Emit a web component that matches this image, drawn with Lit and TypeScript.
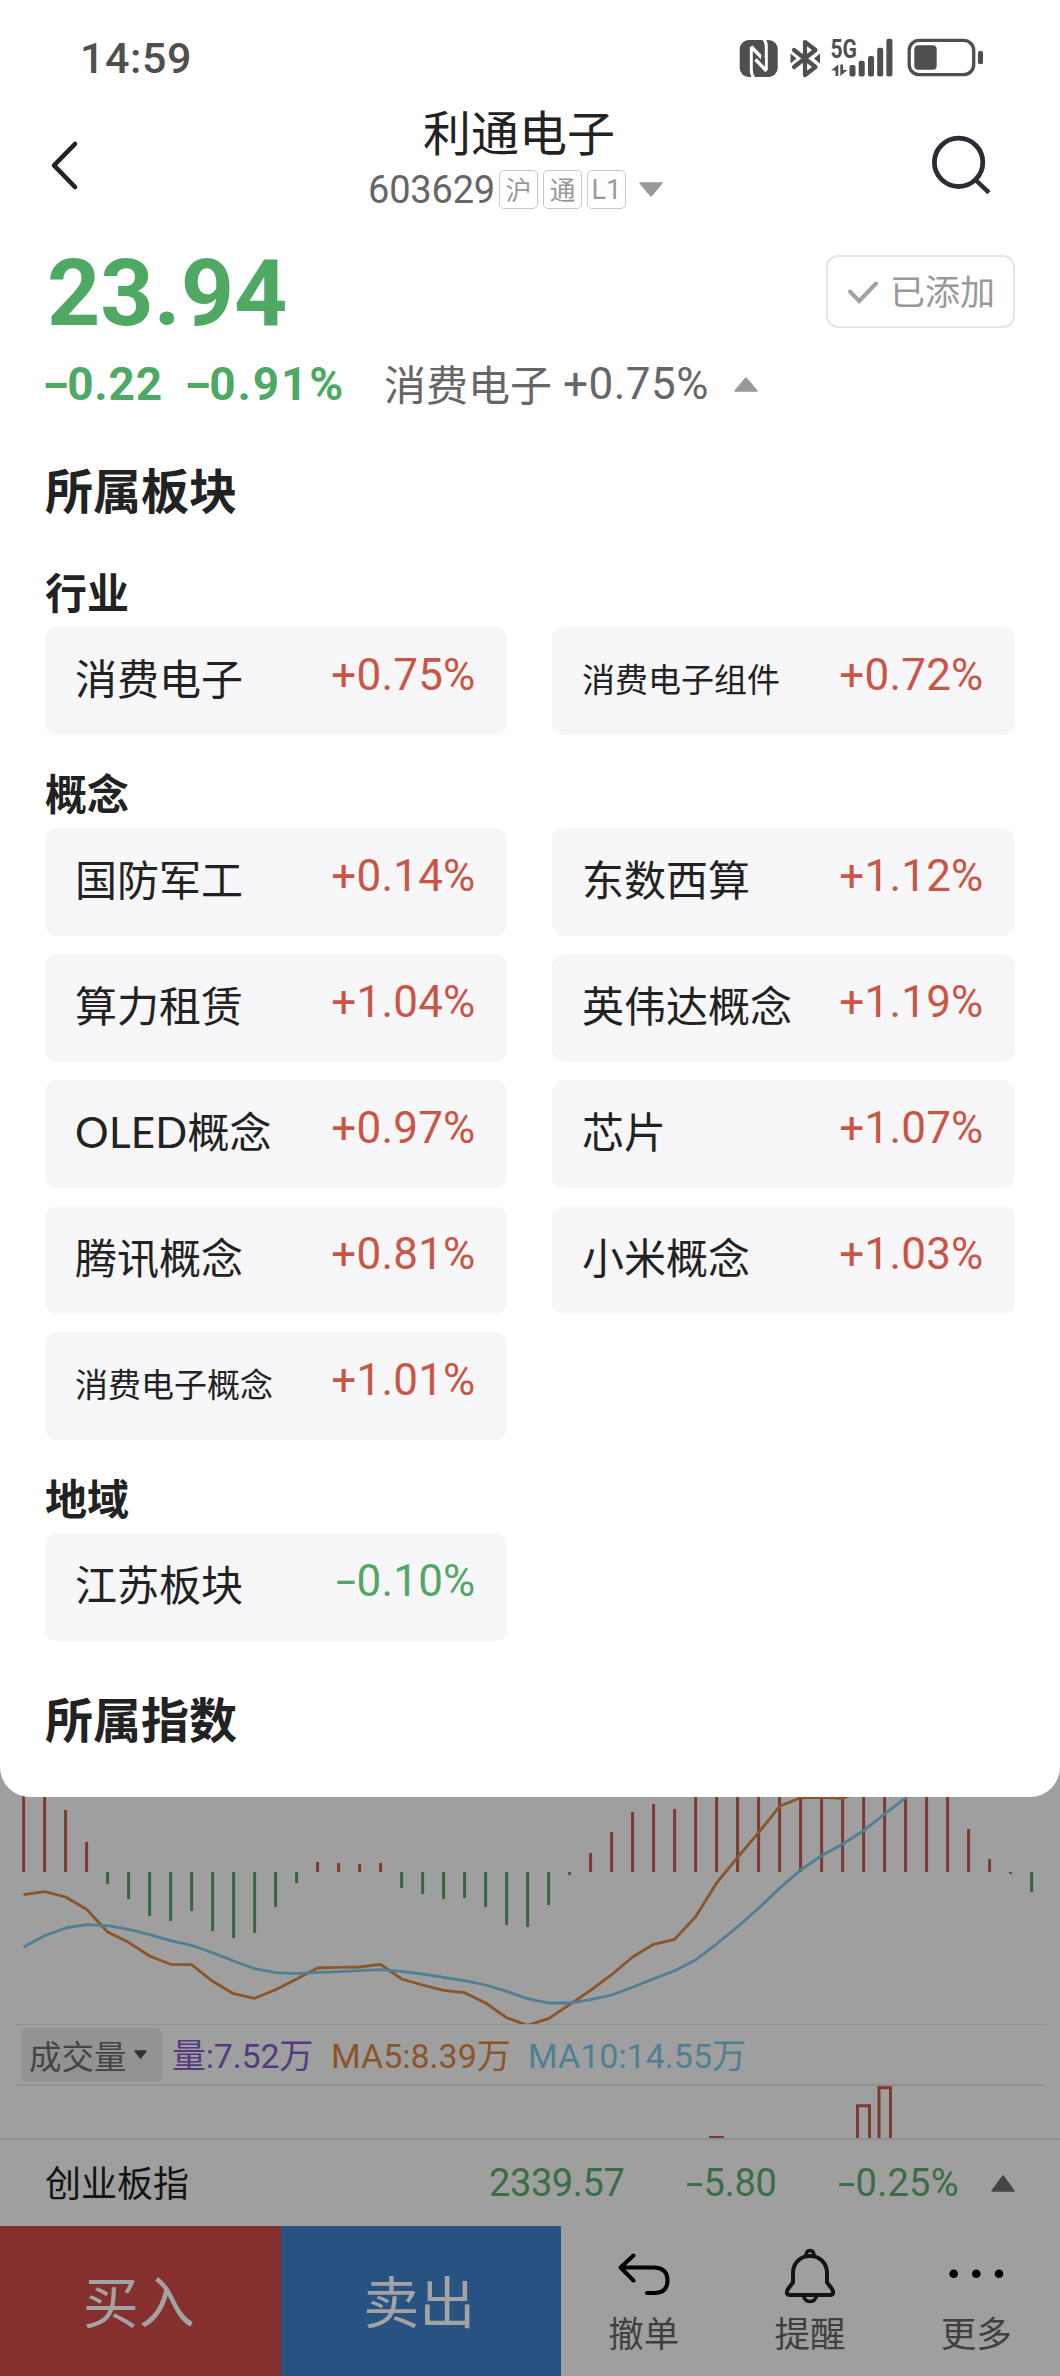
import { LitElement, html, svg, css } from "lit";
import { customElement, property } from "lit/decorators.js";
import { classMap } from "lit/directives/class-map.js";

interface Sector {
  name: string;
  change: string;
}

const groups: { title: string; items: Sector[] }[] = [
  {
    title: "行业",
    items: [
      { name: "消费电子", change: "+0.75%" },
      { name: "消费电子组件", change: "+0.72%" },
    ],
  },
  {
    title: "概念",
    items: [
      { name: "国防军工", change: "+0.14%" },
      { name: "东数西算", change: "+1.12%" },
      { name: "算力租赁", change: "+1.04%" },
      { name: "英伟达概念", change: "+1.19%" },
      { name: "OLED概念", change: "+0.97%" },
      { name: "芯片", change: "+1.07%" },
      { name: "腾讯概念", change: "+0.81%" },
      { name: "小米概念", change: "+1.03%" },
      { name: "消费电子概念", change: "+1.01%" },
    ],
  },
  { title: "地域", items: [{ name: "江苏板块", change: "-0.10%" }] },
];

// MACD chart geometry: one sample every 21px, zero axis at y = 79.
const STEP = 21;
const FIRST = 23.6;
const ZERO = 79;
const histogram = [
  -10, -10, 17, 49, 91, 106, 123, 128, 118, 138, 145, 140, 114, 90, 69, 70, 71,
  70, 95, 101, 106, 105, 114, 132, 134, 112, 82, 60, 39, 19, 11, 16, -10, -10,
  -10, -10, -10, -10, -10, -10, -10, -10, -10, -10, -10, 36, 66, 81, 99,
];
const fastLine = [
  101.7, 98.7, 104, 116.3, 139, 149.3, 163, 171.3, 171.7, 188.3, 200.7, 205.3,
  196.7, 186, 175, 174.3, 174, 171.3, 186, 192, 197.3, 199.7, 210, 224.7, 232.3,
  225.7, 211.7, 197.3, 181.7, 164, 151.3, 146.3, 123.7, 90, 64.3, 39.7, 13.3, 4.8,
  4.4, 5.4, -3,
];
const slowLine = [
  154, 142.7, 135, 131.7, 132.7, 136.3, 141.7, 147.7, 152.3, 159.7, 168, 175.7,
  179.7, 180.7, 179.3, 178.7, 177.7, 176.7, 178.3, 181, 184.3, 187.7, 192, 198.3,
  205.7, 210, 210, 206.7, 202, 194.3, 185.7, 177.7, 167, 151, 133.7, 115.3, 95.3,
  77, 62.7, 51, 37.7, 21, 5, -10,
];

const points = (ys: number[]) =>
  ys.map((y, i) => `${(FIRST + i * STEP).toFixed(1)},${y}`).join(" ");

/** Figure whose leading minus is drawn as a wide dash. */
const figure = (v: string) =>
  v.startsWith("-") ? html`<span class="dash">-</span>${v.slice(1)}` : v;

/** Sets a leading Latin run in its own face. */
const label = (v: string) => {
  const latin = v.match(/^[A-Z]+/)?.[0] ?? "";
  return latin ? html`<span class="latin">${latin}</span>${v.slice(latin.length)}` : v;
};

const dashStyles = css`
  .dash {
    display: inline-block;
    width: 0.46em;
    text-align: center;
    transform: scaleX(1.65);
    letter-spacing: 0;
  }
`;

@customElement("sector-card")
export class SectorCard extends LitElement {
  @property() name = "";
  @property() change = "";

  static styles = [
    dashStyles,
    css`
      :host {
        display: flex;
        justify-content: space-between;
        height: 108px;
        box-sizing: border-box;
        padding: 0 31.5px 0 30px;
        border-radius: 12px;
        background: #f7f7f9;
        white-space: nowrap;
      }
      .name {
        font: 400 42px/100px "Noto Sans CJK SC", sans-serif;
        color: #222;
      }
      .latin {
        font-family: Lato, sans-serif;
        line-height: 0;
        letter-spacing: 0.3px;
      }
      .small {
        font-size: 33px;
        line-height: 102px;
      }
      .change {
        font: 400 44px/97px Roboto, sans-serif;
        letter-spacing: 0.2px;
        color: #cb5545;
      }
      .down {
        color: #50a865;
      }
    `,
  ];

  render() {
    return html`
      <span class=${classMap({ name: true, small: this.name.length === 6 && !/[A-Z]/.test(this.name) })}>${label(this.name)}</span>
      <span class=${classMap({ change: true, down: this.change.startsWith("-") })}>${figure(this.change)}</span>
    `;
  }
}

@customElement("app-root")
export class AppRoot extends LitElement {
  static styles = [
    dashStyles,
    css`
      :host {
        display: block;
        width: 1060px;
        height: 2376px;
        overflow: hidden;
        background: #9f9f9f;
        font-family: "Noto Sans CJK SC", sans-serif;
        color: #222;
        white-space: nowrap;
      }
      svg {
        display: block;
        flex: none;
      }
      .num {
        font-family: Roboto, sans-serif;
      }
      .sheet {
        position: relative;
        z-index: 1;
        height: 1797px;
        box-sizing: border-box;
        background: #fff;
        border-radius: 0 0 30px 30px;
      }
      .status {
        display: flex;
        justify-content: space-between;
        height: 100px;
        padding: 0 70px 0 80px;
        color: #4f4f4f;
      }
      .clock {
        font: 500 43px/116px Roboto, sans-serif;
        letter-spacing: 0.6px;
      }
      .status svg {
        margin-top: 34px;
      }
      .nav {
        display: flex;
        height: 125px;
        padding: 0 60px 0 45px;
      }
      .heading {
        flex: 1;
        display: flex;
        flex-direction: column;
        align-items: center;
      }
      .title {
        font-size: 48px;
        line-height: 60px;
        padding-left: 2px;
      }
      .sub {
        display: flex;
        align-items: center;
        height: 40px;
        margin-top: 9px;
        padding-right: 5px;
      }
      .code {
        font-size: 38px;
        line-height: 40px;
        padding-top: 2px;
        letter-spacing: -0.2px;
        color: #666;
        margin-right: 4px;
      }
      .tag {
        width: 39px;
        height: 39px;
        box-sizing: border-box;
        border: 1.5px solid #c9c9c9;
        border-radius: 5px;
        margin-right: 5px;
        text-align: center;
        font-size: 26px;
        line-height: 35px;
        color: #999;
      }
      .tag.num {
        font-size: 27px;
        line-height: 39px;
      }
      .sub svg {
        margin-left: 8px;
      }
      .quote {
        display: flex;
        justify-content: space-between;
        height: 127px;
        padding: 0 45px 0 47px;
      }
      .price {
        font-size: 93px;
        font-weight: 700;
        line-height: 138px;
        color: #50a865;
      }
      .added {
        display: flex;
        align-items: center;
        width: 189px;
        height: 73px;
        box-sizing: border-box;
        margin-top: 30px;
        padding-left: 19px;
        border: 2px solid #e5e5e5;
        border-radius: 12px;
        font-size: 35px;
        line-height: 64px;
        color: #999;
      }
      .added > span {
        height: 67px;
      }
      .added svg {
        margin-right: 11px;
      }
      .changes {
        display: flex;
        align-items: center;
        height: 64px;
        padding-left: 46px;
      }
      .delta {
        font-size: 46px;
        font-weight: 700;
        line-height: 64px;
        color: #50a865;
      }
      .delta.first {
        width: 142px;
        letter-spacing: 0.8px;
      }
      .delta.second {
        width: 192px;
        letter-spacing: 1.9px;
      }
      .industry {
        font-size: 42px;
        line-height: 60px;
        height: 63px;
        color: #666;
        width: 178px;
        margin-left: 4px;
      }
      .industry-change {
        font-size: 44px;
        line-height: 66px;
        letter-spacing: 0.5px;
        color: #666;
        width: 171px;
        margin-left: 1px;
      }
      .section {
        font-size: 48px;
        font-weight: 700;
        line-height: 60px;
        height: 60px;
        margin: 42px 0 0 45px;
      }
      .group-title {
        font-size: 42px;
        font-weight: 700;
        line-height: 48px;
        height: 60px;
        margin: 0;
      }
      .group {
        padding: 0 45px;
        margin-bottom: 33px;
      }
      .groups {
        padding-top: 49px;
      }
      .grid {
        display: grid;
        grid-template-columns: 462px 1fr;
        gap: 18px 45px;
      }
      .section.last {
        margin-top: 46px;
      }
      .macd {
        margin-top: -4px;
      }
      .indicator {
        display: flex;
        align-items: center;
        height: 59px;
        margin: 0 15px;
        border-top: 1px solid #909090;
        border-bottom: 2px solid #919191;
        padding-left: 6px;
        font-size: 33px;
      }
      .picker {
        display: flex;
        align-items: center;
        width: 141px;
        height: 54px;
        box-sizing: border-box;
        padding-left: 8px;
        border-radius: 6px;
        background: #939393;
        color: #444;
        font-size: 32.5px;
        line-height: 50px;
      }
      .picker svg {
        margin-left: 7px;
      }
      .legend {
        font-family: Roboto, "Noto Sans CJK SC", sans-serif;
        font-size: 34px;
        line-height: 54px;
        padding-top: 2px;
      }
      .vol {
        color: #553a80;
        width: 150px;
        margin-left: 10px;
        letter-spacing: -0.2px;
      }
      .ma5 {
        color: #8a5529;
        width: 197px;
        margin-left: 9px;
      }
      .ma10 {
        color: #4f7f92;
      }
      .index {
        display: flex;
        height: 86px;
        border-top: 2px solid #919191;
        padding-left: 45px;
        align-items: center;
      }
      .index-name {
        font-size: 36px;
        line-height: 80px;
        height: 84px;
        width: 444px;
        color: #141414;
      }
      .index-value {
        font-size: 38px;
        line-height: 86px;
        letter-spacing: -0.4px;
        color: #3a6c46;
      }
      .index-value.a {
        width: 197px;
      }
      .index-value.b {
        width: 152px;
        letter-spacing: -0.2px;
      }
      .index-value.c {
        width: 153px;
        letter-spacing: 0.3px;
      }
      .actions {
        display: flex;
        height: 150px;
      }
      .trade {
        width: 280.5px;
        box-sizing: border-box;
        padding-right: 3px;
        text-align: center;
        font-size: 56px;
        line-height: 145px;
        color: #a3a3a3;
      }
      .buy {
        background: #85302c;
      }
      .sell {
        background: #285282;
      }
      .tool {
        flex: 1;
        display: flex;
        flex-direction: column;
        align-items: center;
        color: #3f3f3f;
        font-size: 35.5px;
        line-height: 50px;
      }
      .tool svg {
        margin-top: 18px;
        margin-bottom: 3px;
      }
      .tool span {
        padding-right: 1px;
      }
    `,
  ];

  private statusIcons() {
    return svg`
      <svg width="255" height="50" viewBox="735 34 255 50" fill="#4f4f4f">
        <rect x="739.700" y="40" width="38" height="37" rx="9"/>
        <g stroke="#fff" stroke-width="3" fill="none">
          <path d="M754.500 79Q751.300 75 751.300 70V47"/>
          <path d="M762.500 38Q766.300 41 766.300 46V70"/>
          <path d="M751 46.500L762 58" stroke-width="3.400"/>
          <path d="M755.500 59.500L766.500 71" stroke-width="3.400"/>
        </g>
        <path d="M761 54.500L764.800 58.500V66L761 62z"/>
        <g fill="none" stroke="#4f4f4f" stroke-width="4.200" stroke-linejoin="round" stroke-linecap="round">
          <path d="M794 50l21.500 17-10.500 8V42l10.500 8-21.500 17"/>
        </g>
        <path d="M790.500 53.500l6 5-6 5zM820 53.500l-6 5 6 5z"/>
        <text x="830.500" y="57.500" font-family="Roboto, sans-serif" font-size="25.500" font-weight="700" textLength="26.500" lengthAdjust="spacingAndGlyphs">5G</text>
        <path d="M838.300 64.500v11.500h-2.800v-5.500h-4.500zM840.300 64.500h2.700v5.500h4.500l-7.200 6z"/>
        <rect x="849.500" y="65" width="6" height="11.500" rx="2"/>
        <rect x="858.700" y="60.700" width="6" height="15.800" rx="2"/>
        <rect x="868" y="56" width="6" height="20.500" rx="2"/>
        <rect x="877.200" y="47.700" width="6" height="28.800" rx="2"/>
        <rect x="886.400" y="38.700" width="6" height="37.800" rx="2"/>
        <rect x="909.200" y="40.300" width="64.500" height="34.400" rx="10" fill="none" stroke="#4f4f4f" stroke-width="3.300"/>
        <rect x="914.300" y="45.300" width="22.400" height="24.400" rx="4"/>
        <rect x="978" y="50.700" width="5" height="13.500" rx="2.500"/>
      </svg>`;
  }

  private triangle(up: boolean, w: number, h: number, color: string) {
    const d = up
      ? `M${w / 2} 1L${w - 1} ${h - 1}H1Z`
      : `M1 1H${w - 1}L${w / 2} ${h - 1}Z`;
    return html`<svg width=${w} height=${h} viewBox="0 0 ${w} ${h}">
      <path d=${d} fill=${color} stroke=${color} stroke-width="1.500" stroke-linejoin="round"></path>
    </svg>`;
  }

  private macdChart() {
    return html`
      <svg class="macd" width="1060" height="231" viewBox="0 0 1060 231">
        ${histogram.map((y, i) => {
          const x = FIRST + i * STEP - 1.500;
          return svg`<rect x=${x} y=${Math.min(y, ZERO)} width="3" height=${Math.abs(y - ZERO)}
            fill=${y < ZERO ? "#7d3a31" : "#376641"}></rect>`;
        })}
        <polyline points=${points(fastLine)} fill="none" stroke="#8a5529" stroke-width="2.800" stroke-linejoin="round"></polyline>
        <polyline points=${points(slowLine)} fill="none" stroke="#4f7f92" stroke-width="2.800" stroke-linejoin="round"></polyline>
      </svg>`;
  }

  render() {
    return html`
      <div class="sheet">
        <div class="status">
          <span class="clock">14:59</span>
          ${this.statusIcons()}
        </div>
        <div class="nav">
          <svg width="66" height="125" viewBox="46 100 66 125">
            <path d="M76 144L55 165.300 76 187" fill="none" stroke="#222" stroke-width="4.600" stroke-linecap="round" stroke-linejoin="round"></path>
          </svg>
          <div class="heading">
            <div class="title">利通电子</div>
            <div class="sub">
              <span class="code num">603629</span>
              <span class="tag">沪</span>
              <span class="tag">通</span>
              <span class="tag num">L1</span>
              ${this.triangle(false, 24, 15, "#999")}
            </div>
          </div>
          <svg width="75" height="125" viewBox="925 100 75 125">
            <g fill="none" stroke="#2a2d35" stroke-width="4.800">
              <circle cx="958.600" cy="162.300" r="24.200"></circle>
              <path d="M976 180.300L989 192.700" stroke-width="4.400"></path>
            </g>
          </svg>
        </div>
        <div class="quote">
          <span class="price num">23.94</span>
          <div class="added">
            <svg width="32" height="24" viewBox="847 280 32 24">
              <path d="M850 291.500L859.200 301 876 283.500" fill="none" stroke="#a3a3a3" stroke-width="4" stroke-linecap="round"></path>
            </svg>
            <span>已添加</span>
          </div>
        </div>
        <div class="changes">
          <span class="delta first num">${figure("-0.22")}</span>
          <span class="delta second num">${figure("-0.91%")}</span>
          <span class="industry">消费电子</span>
          <span class="industry-change num">+0.75%</span>
          ${this.triangle(true, 24, 15, "#999")}
        </div>
        <div class="section">所属板块</div>
        <div class="groups">
          ${groups.map(
            (g) => html`<div class="group">
              <div class="group-title">${g.title}</div>
              <div class="grid">
                ${g.items.map(
                  (s) => html`<sector-card .name=${s.name} .change=${s.change}></sector-card>`
                )}
              </div>
            </div>`
          )}
        </div>
        <div class="section last">所属指数</div>
      </div>

      ${this.macdChart()}
      <div class="indicator">
        <div class="picker">成交量${this.triangle(false, 13, 9, "#333")}</div>
        <span class="legend vol">量:7.52万</span>
        <span class="legend ma5">MA5:8.39万</span>
        <span class="legend ma10">MA10:14.55万</span>
      </div>
      <svg width="1060" height="52" viewBox="0 2086 1060 52">
        <g fill="none" stroke="#7d3a31" stroke-width="3">
          <path d="M709 2137.500H724M857.500 2140V2105.800H869.500V2140M879 2140V2087.800H890.500V2140"></path>
        </g>
      </svg>
      <div class="index">
        <span class="index-name">创业板指</span>
        <span class="index-value a num">2339.57</span>
        <span class="index-value b num">${figure("-5.80")}</span>
        <span class="index-value c num">${figure("-0.25%")}</span>
        ${this.triangle(true, 24, 17, "#444")}
      </div>
      <div class="actions">
        <div class="trade buy">买入</div>
        <div class="trade sell">卖出</div>
        <div class="tool">
          <svg width="60" height="60" viewBox="614 2244 60 60">
            <path d="M633.500 2255.500L620.500 2267.500 633.500 2280.500M621 2267.500H655Q667.500 2268.500 667.500 2280.500T655 2293H647" fill="none" stroke="#000" stroke-width="4" stroke-linecap="round" stroke-linejoin="round"></path>
          </svg>
          <span>撤单</span>
        </div>
        <div class="tool">
          <svg width="60" height="60" viewBox="779.500 2244 60 60">
            <g fill="none" stroke="#141414" stroke-width="4" stroke-linejoin="round">
              <path d="M809.500 2256C799 2256 792.500 2264 792.500 2273V2282.500L787.500 2289Q784.500 2294.500 789.500 2295H829.500Q834.500 2294.500 831.500 2289L826.500 2282.500V2273C826.500 2264 820 2256 809.500 2256Z"></path>
              <path d="M805.500 2256Q805.500 2250.500 809.500 2250.500T813.500 2256" stroke-width="3.500"></path>
              <path d="M803 2296Q804.500 2301.500 809.500 2301.500T816 2296" stroke-width="3.500"></path>
            </g>
          </svg>
          <span>提醒</span>
        </div>
        <div class="tool">
          <svg width="60" height="60" viewBox="946.500 2244 60 60">
            <circle cx="953.200" cy="2273.700" r="4.300"></circle>
            <circle cx="975.800" cy="2273.700" r="4.300"></circle>
            <circle cx="998.500" cy="2273.700" r="4.300"></circle>
          </svg>
          <span>更多</span>
        </div>
      </div>
    `;
  }
}
